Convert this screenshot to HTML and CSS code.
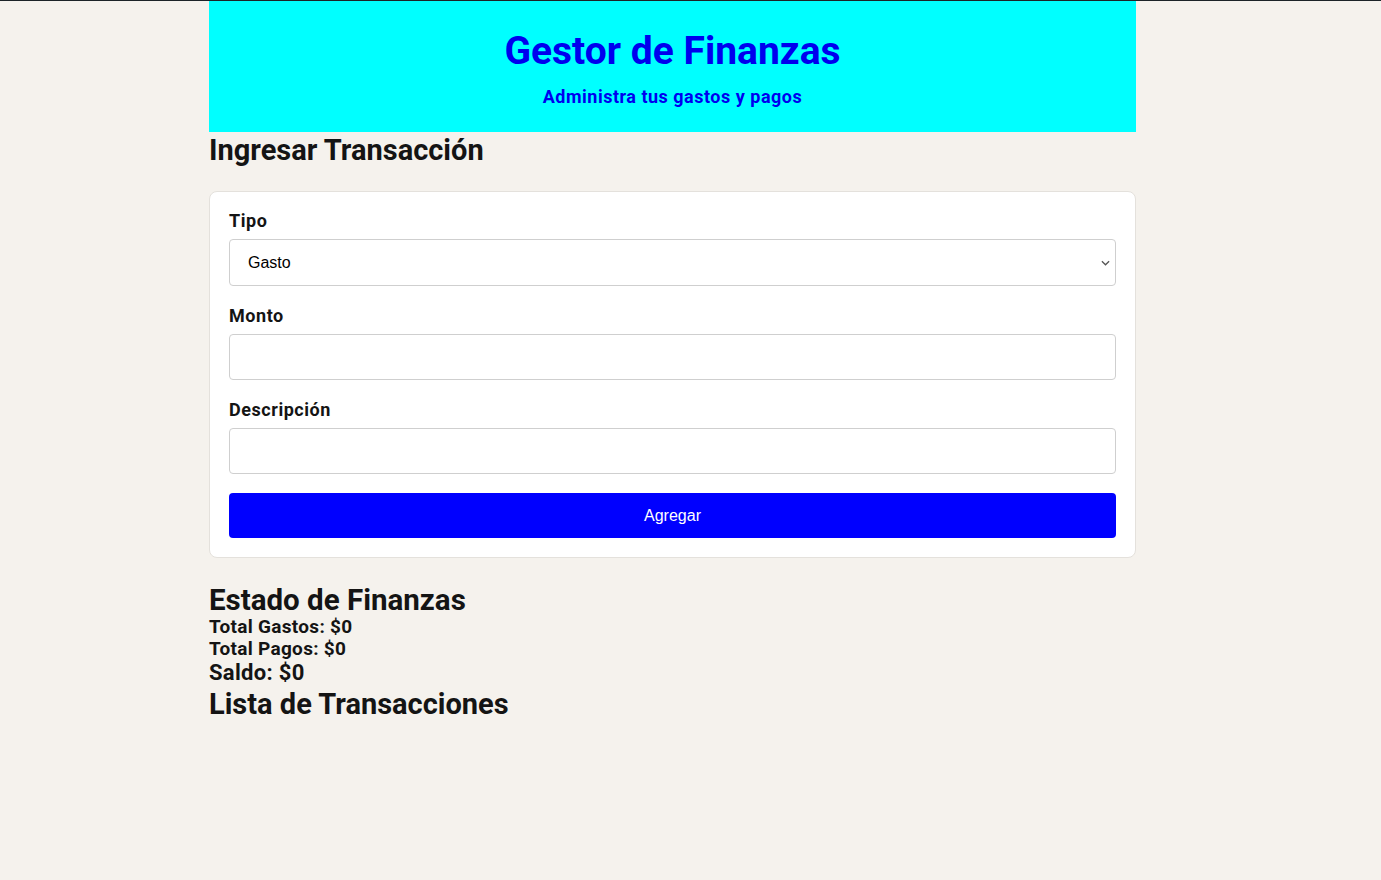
FILE: index.html
```html
<!DOCTYPE html>
<html lang="es">
<head>
<meta charset="utf-8">
<title>Gestor de Finanzas</title>
<link rel="stylesheet" href="styles.css">
</head>
<body>
<div class="page">
  <header class="hero">
    <h1 class="hero-title">Gestor de Finanzas</h1>
    <p class="hero-sub">Administra tus gastos y pagos</p>
  </header>
  <h2 class="section-title">Ingresar Transacción</h2>
  <form class="card">
    <label class="field-label" for="tipo">Tipo</label>
    <select id="tipo" class="field-input field-select">
      <option>Gasto</option>
      <option>Pago</option>
    </select>
    <label class="field-label" for="monto">Monto</label>
    <input id="monto" class="field-input" type="text">
    <label class="field-label" for="desc">Descripción</label>
    <input id="desc" class="field-input" type="text">
    <button type="button" class="btn">Agregar</button>
  </form>
  <h2 class="status-title">Estado de Finanzas</h2>
  <p class="total">Total Gastos: $0</p>
  <p class="total">Total Pagos: $0</p>
  <p class="saldo">Saldo: $0</p>
  <h2 class="list-title">Lista de Transacciones</h2>
</div>
</body>
</html>
```
FILE: styles.css
```css
html, body {
  margin: 0;
  padding: 0;
}
body {
  background: #f5f2ed;
  border-top: 1px solid #1c2328;
  font-family: Roboto, "Liberation Sans", sans-serif;
  color: #141414;
  min-height: 879px;
}
.page {
  width: 927px;
  margin-left: 209px;
  display: flex;
  flex-direction: column;
}
.hero {
  background: #00ffff;
  height: 131px;
  display: flex;
  flex-direction: column;
  align-items: center;
  box-sizing: border-box;
  padding-top: 27px;
}
.hero-title {
  margin: 0;
  color: #0000ee;
  font-size: 39px;
  line-height: 46px;
  font-weight: 700;
}
.hero-sub {
  margin: 12px 0 0;
  color: #0000ee;
  font-size: 18px;
  line-height: 22px;
  font-weight: 700;
  letter-spacing: 0.5px;
}
.section-title {
  margin: 1px 0 0 0;
  font-size: 29px;
  line-height: 34px;
  font-weight: 700;
}
.card {
  margin-top: 24px;
  background: #fff;
  border: 1px solid #e4e1dc;
  border-radius: 8px;
  padding: 19px 19px 19px;
  display: flex;
  flex-direction: column;
}
.field-label {
  font-size: 18px;
  line-height: 20px;
  font-weight: 700;
  letter-spacing: 0.55px;
  margin-bottom: 8px;
}
.field-input {
  height: 46px;
  box-sizing: border-box;
  border: 1px solid #cfcfcf;
  border-radius: 4px;
  background: #fff;
  font-family: "Liberation Sans", Arial, sans-serif;
  font-size: 16px;
  padding: 0 18px;
  margin-bottom: 20px;
  color: #000;
}
.field-select {
  height: 47px;
  appearance: none;
  -webkit-appearance: none;
  background-image: url("data:image/svg+xml,%3Csvg xmlns='http://www.w3.org/2000/svg' width='10' height='6' viewBox='0 0 10 6'%3E%3Cpath d='M1 1l4 4 4-4' fill='none' stroke='%23555' stroke-width='1.4'/%3E%3C/svg%3E");
  background-repeat: no-repeat;
  background-position: right 5px center;
  background-size: 9px 6px;
}
.btn {
  margin-top: -1px;
  height: 45px;
  border: none;
  border-radius: 4px;
  background: #0000ff;
  color: #fff;
  font-family: "Liberation Sans", Arial, sans-serif;
  font-size: 16px;
}
.status-title {
  margin: 26px 0 0 0;
  font-size: 29.5px;
  line-height: 32px;
  font-weight: 700;
}
.total {
  margin: 0;
  font-size: 19px;
  line-height: 22px;
  font-weight: 700;
  letter-spacing: 0.3px;
}
.saldo {
  margin: 0;
  font-size: 22px;
  line-height: 26px;
  font-weight: 700;
  letter-spacing: 0.3px;
}
.list-title {
  margin: 0;
  font-size: 29px;
  line-height: 36px;
  font-weight: 700;
}
```
